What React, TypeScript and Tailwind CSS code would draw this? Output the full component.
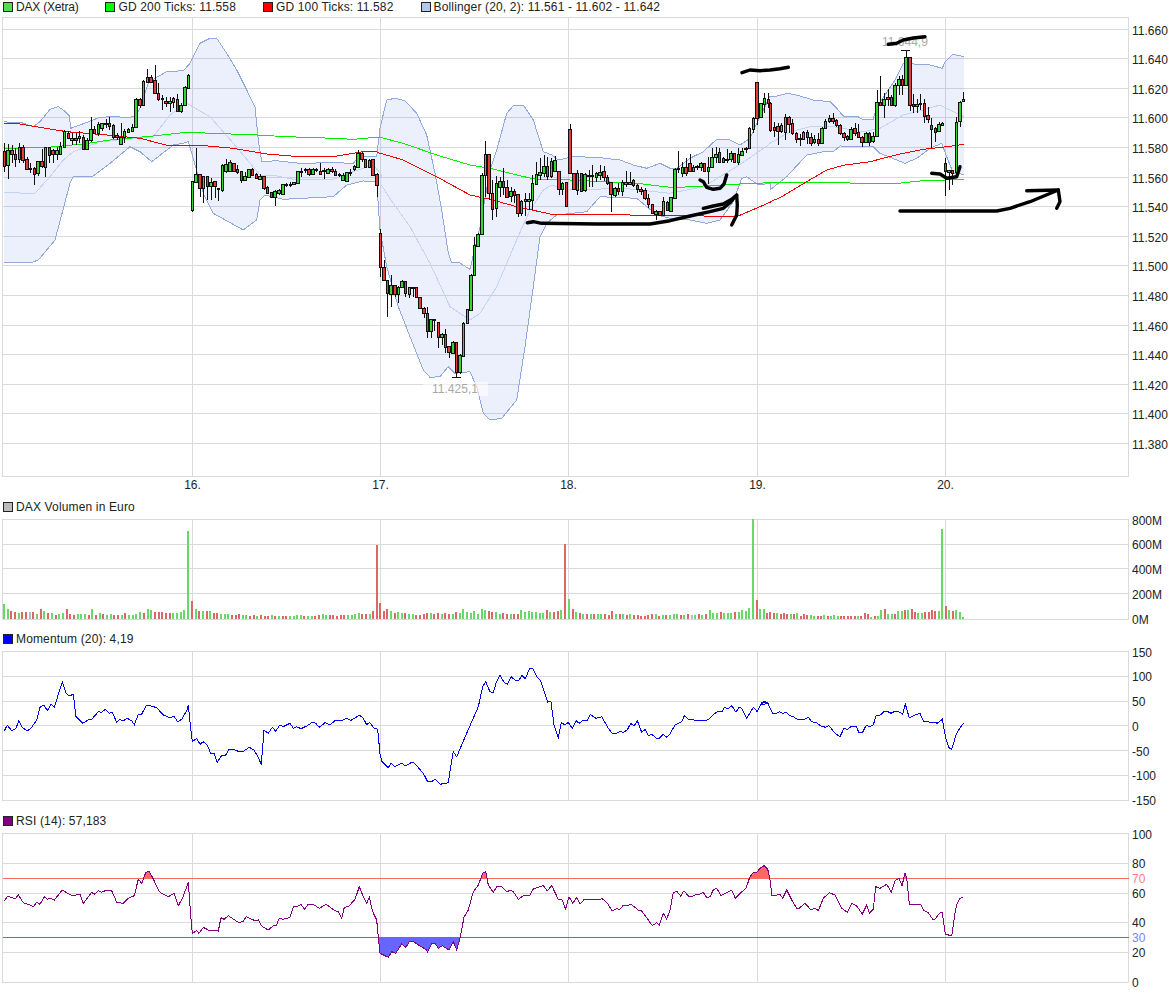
import type { ReactNode } from 'react';

const DAY_LINES = [192.5, 380.5, 568.5, 757.5, 945.5];
const LEFT = 2.5;
const RIGHT = 1128.5;

// points read off 3x crops: [x, y, x, y, ...] => screen coords
function crop(x0: number, y0: number, flat: number[]): [number, number][] {
  const out: [number, number][] = [];
  for (let i = 0; i < flat.length; i += 2) out.push([x0 + flat[i] / 3, y0 + flat[i + 1] / 3]);
  return out;
}
const toPoints = (pts: [number, number][]) => pts.map((p) => `${p[0].toFixed(1)},${p[1].toFixed(1)}`).join(' ');

type Candle = [number, number, number, number, number]; // green, top, bottom, high, low

const DAY1: Candle[] = [
  [0,453,497,430,515],[1,450,495,433,538],[0,450,463,436,490],[0,463,477,445,500],[1,441,477,428,490],[0,441,480,436,490],[0,478,506,470,510],[1,503,505,488,520],[0,505,521,500,555],[1,484,520,484,528],
  [0,484,497,448,505],[1,442,500,440,530],[0,442,465,442,490],[0,451,463,446,488],[1,450,463,440,480],[1,437,461,425,465],[1,393,440,390,442],[0,398,414,392,418],[1,413,420,398,435],[0,415,421,400,435],
  [1,408,415,392,430],[0,412,446,405,448],[1,420,447,415,450],[1,388,421,352,425],[0,388,398,378,402],[1,372,398,365,408],[1,370,383,368,392],[1,369,372,358,385],[0,370,378,352,390],[0,375,412,372,416],
  [0,406,410,400,420],[1,410,433,370,435],[1,392,412,388,428],[1,388,395,383,398],[1,381,392,372,395],[1,298,380,295,385],[0,298,314,295,325],[1,243,314,240,318],[1,232,246,208,250],[0,232,245,225,250],
  [0,241,278,195,280],[0,278,297,250,303],[1,295,297,285,330],[0,303,308,290,320],[1,304,310,290,335],[1,295,305,290,325],[0,296,334,282,337],[1,316,334,310,338],[1,262,314,258,316],[1,224,263,222,265],
];
const DAY2: Candle[] = [
  [1,544,630,544,635],[1,522,545,445,548],[0,522,563,522,590],[1,528,563,528,608],[0,528,557,528,600],[1,546,557,535,600],[0,544,558,544,595],[1,565,568,565,602],[1,496,570,493,575],[1,492,512,478,518],
  [1,485,512,480,515],[0,488,513,488,515],[0,507,515,495,522],[0,514,540,514,548],[1,529,540,516,543],[1,507,530,506,535],[0,507,524,503,525],[0,522,535,518,537],[1,528,536,522,540],[0,529,564,528,570],
  [0,561,578,558,580],[0,576,590,575,592],[1,574,590,570,617],[1,570,580,566,585],[1,553,581,553,583],[1,553,556,548,562],[1,552,556,545,562],[1,547,552,545,556],[1,514,550,513,552],[1,512,514,503,532],
  [0,508,511,505,520],[0,507,523,505,527],[1,508,523,505,525],[1,508,510,503,516],[0,512,522,490,525],[1,510,513,505,538],[1,507,518,503,522],[0,507,514,502,520],[0,513,525,506,528],[1,522,525,518,532],
  [1,525,541,520,543],[1,517,542,515,545],[1,515,517,508,527],[1,498,508,495,512],[1,458,500,450,503],[0,460,478,455,485],[0,478,500,476,505],[1,480,500,476,505],[0,478,524,476,526],[0,523,555,520,590],
];
const DAY3A: Candle[] = [
  [0,460,562,448,590],[0,562,600,540,602],[0,600,640,600,710],[1,616,642,586,682],[0,616,642,616,652],[1,620,642,617,668],[1,602,620,600,622],[0,604,640,604,650],[1,622,642,620,655],[1,620,622,620,652],
  [0,622,652,622,655],[0,650,685,650,688],[0,685,700,680,715],[0,700,752,680,775],[1,717,752,717,775],[1,718,720,718,752],[0,727,772,727,805],[1,763,772,760,795],[0,763,800,748,820],[0,798,817,798,835],
  [1,786,818,784,822],[0,786,876,785,890],[1,826,875,822,882],[1,728,828,726,830],[1,688,730,688,732],[1,584,690,582,692],[1,496,584,470,586],[1,463,497,458,500],[1,284,463,280,465],[1,223,285,183,350],
  [0,223,340,223,360],[0,340,386,300,420],[1,310,385,288,410],[1,302,320,290,352],[0,303,322,265,345],[0,322,350,300,352],[1,332,348,322,365],[0,332,345,328,370],[0,343,398,343,412],[1,362,398,360,408],
  [1,358,362,340,408],[1,358,362,340,390],
];
const DAY3B: Candle[] = [
  [1,310,360,284,390],[1,283,312,245,315],[1,277,284,235,300],[1,258,278,225,290],[0,258,288,230,300],[1,242,288,235,295],[1,240,272,228,275],[0,272,328,272,345],[1,308,328,305,345],[0,307,377,307,378],
  [0,148,278,132,280],[0,280,326,278,330],[1,278,330,270,345],[0,278,332,278,335],[1,282,330,280,335],[1,284,288,270,320],[1,286,289,255,320],[1,280,290,275,305],[1,275,285,255,300],[0,274,292,258,302],
  [0,290,308,285,315],[0,307,343,305,395],[1,325,345,322,350],[0,324,332,308,345],[1,305,332,300,348],[1,305,313,273,320],[1,305,312,275,315],[0,300,316,298,320],[0,316,326,313,338],[0,326,334,320,345],
  [0,330,355,325,360],[0,355,373,342,385],[0,373,400,372,403],[1,392,402,390,420],[0,392,405,392,408],[1,363,405,350,407],[0,365,390,362,392],[1,352,392,350,394],[1,268,353,265,355],[1,263,268,212,280],
  [1,262,280,245,292],[0,262,280,235,288],[0,250,272,222,275],[1,260,272,256,275],[1,258,262,255,270],[1,250,262,245,272],[0,250,272,248,275],[1,262,272,230,312],[1,232,262,205,265],[1,222,232,202,248],
  [0,216,245,204,248],[0,235,245,232,250],[1,236,238,208,250],[1,220,236,212,245],[0,220,245,218,248],[1,222,245,205,255],[1,212,224,205,226],[1,205,208,200,218],[1,145,205,142,207],[1,115,147,112,160],
  [0,5,115,5,135],[1,70,112,68,115],[1,55,72,40,100],[0,58,70,40,85],
];
const DAY4B: Candle[] = [
  [0,250,330,245,335],[0,322,330,305,352],[0,318,333,310,375],[1,315,333,310,340],[1,292,337,282,360],[0,292,312,288,338],[0,310,340,298,345],[0,338,356,335,370],[1,355,358,342,378],[1,336,356,333,360],
  [0,336,352,330,372],[0,352,368,340,378],[1,358,366,345,372],[0,358,368,340,378],[1,325,368,322,370],[1,303,325,298,328],[1,294,304,285,310],[0,295,302,280,312],[0,300,316,298,320],[0,315,340,312,345],
  [0,340,350,335,362],[0,348,358,345,362],[1,326,358,322,360],[0,325,338,310,348],[0,335,350,312,352],[0,350,366,348,380],[1,338,365,335,368],[0,338,365,335,378],[1,348,362,335,368],[1,247,348,210,350],
  [0,247,255,168,258],[1,238,255,220,295],[0,232,238,208,258],[0,232,256,225,258],[1,194,256,190,260],[1,178,196,168,226],[0,178,196,165,225],[1,112,196,92,198],[0,112,255,112,272],[0,253,257,222,280],
  [1,253,257,238,280],[0,250,253,222,270],[0,250,288,238,308],[0,286,296,260,310],[0,316,326,295,385],[0,324,335,320,365],[1,312,332,305,335],[1,308,315,305,318],
];
const DAY5: Candle[] = [
  [0,430,452,415,527],[1,450,455,450,510],[0,450,460,450,495],[1,307,455,292,462],[1,245,302,243,322],[1,236,244,217,246],
];

const CANDLE_BLOCKS: { items: Candle[]; from: number; to: number; y0: number }[] = [
  { items: DAY1, from: 4.3, to: 188.7, y0: 0 },
  { items: DAY2, from: 192.3, to: 377, y0: 0 },
  { items: DAY3A, from: 380.3, to: 529, y0: 80 },
  { items: DAY3B, from: 532.7, to: 768.3, y0: 80 },
  { items: DAY4B, from: 770.7, to: 942.7, y0: 20 },
  { items: DAY5, from: 945.3, to: 963.7, y0: 20 },
];

const VOLUME_BLOCKS: { bars: string; from: number; to: number }[] = [
  {
    from: 4,
    to: 188,
    bars: 'G15 G10 R8 R7 G6 R7 R7 N7 R7 G5 R10 G8 R6 G6 R4 G5 G6 R10 R5 R4 G5 G5 G5 R4 G10 R4 G6 R5 G4 G5 R4 R4 G4 R6 G4 G4 G5 G7 R6 G10 G9 R7 R7 R7 R6 R6 G6 G6 G7 G9 G88',
  },
  {
    from: 192,
    to: 377,
    bars: 'R18 G10 R8 G8 R8 G8 R6 R6 G5 G5 G5 R4 R4 R5 G4 G4 R3 R4 G3 R4 R3 R3 G4 R3 G3 R3 R3 G3 G3 G4 G4 R3 G3 G3 R3 R4 G5 G4 R4 R4 R3 R4 R4 G4 G4 G5 G6 R5 R5 G5 R8 R74',
  },
  {
    from: 380,
    to: 565,
    bars: 'R16 R8 R10 G8 R6 G7 G6 R6 G5 G5 R4 R4 R5 R6 G6 R5 R6 G5 R6 R5 G5 R7 G6 G10 G7 G6 G8 G5 G10 G9 R8 R7 G7 G5 R6 R5 G5 R5 R5 G9 G7 G8 G7 G7 G6 G6 R9 G7 R7 R8 G9 R75',
  },
  {
    from: 569,
    to: 753,
    bars: 'G20 R10 G7 R6 G5 R5 G5 R5 G5 G5 R5 R4 R8 G5 R5 G5 R4 G5 R4 R4 R3 R3 R4 R5 G5 R3 G4 R4 G4 G5 G5 R4 G4 R5 N4 G4 R5 G4 R5 G9 G6 G6 R7 G6 G6 G6 R7 G7 G9 G8 G11 G100',
  },
  {
    from: 757,
    to: 942,
    bars: 'R19 G10 G10 R6 R7 R6 G6 R5 R6 R5 G5 R5 G6 R3 R5 R4 G4 G3 R3 R3 G4 R3 G3 G4 G3 R3 R3 R3 R3 R3 G3 R3 R6 R5 G2 R3 G3 G9 R10 G5 G5 R5 G8 G8 R9 G9 R10 R7 G6 G6 R7 R7 R9 R8 G8 G90',
  },
  { from: 946, to: 963, bars: 'R13 G9 R8 G9 G7 G2' },
];

const VOLUME_FILL: Record<string, string> = { G: '#66d966', R: '#dd6666', N: '#bbbbbb' };

const BB_UPPER = [
  ...crop(0, 0, [13,365,40,368,65,368,100,380,120,365,150,328,175,320,190,330,208,348,212,385,240,375,300,352,340,350,380,352,405,350,420,325,445,250,470,232,500,215,550,212,570,190,600,130,630,115,650,115,680,160,710,210,740,270,765,320,775,420,785,485,830,482,900,490,1000,488,1060,490,1080,465,1100,470,1130,470]),
  ...crop(370, 80, [30,145,50,60,75,55,105,62,140,100,170,165,195,280,215,390,235,520,245,548,265,546,300,568,330,440,360,270,380,210,410,100,432,75,460,75,490,120,520,215,545,225,565,240,610,230,680,232,750,240,790,255,830,265,870,250,900,265,920,265,960,235,1000,215,1040,178,1080,180,1110,195,1140,175,1165,120,1195,60]),
  ...crop(770, 20, [0,228,20,228,55,220,90,228,130,240,180,245,200,265,220,288,260,288,275,297,310,297,320,260,345,225,375,180,400,130,480,135,517,145,525,125,548,103,582,110]),
];
const BB_LOWER = [
  [4, 262] as [number, number],
  [30, 263] as [number, number],
  ...crop(0, 0, [115,780,165,720,210,550,220,530,280,528,330,490,390,440,420,455,455,485,520,435,550,430,565,425,575,460,610,580,640,640,730,690,770,660,780,600,795,585,850,598,1000,590,1040,555,1090,543,1130,545]),
  ...crop(370, 80, [30,450,50,560,85,680,120,770,160,870,180,892,210,890,235,860,255,880,300,875,320,920,340,1000,360,1020,395,1015,440,960,465,800,490,620,510,470,530,430,560,405,650,395,690,350,800,355,860,405,900,415,960,420,1010,430,1050,420,1090,365,1115,295,1130,290,1165,315,1200,310]),
  ...crop(770, 20, [0,510,50,470,110,405,160,395,190,395,210,378,310,380,330,400,405,430,440,415,480,385,515,370,530,410,550,460,582,463]),
];
const BB_MID = [
  ...crop(0, 0, [13,578,105,580,150,530,190,480,220,455,300,425,400,415,460,410,510,345,560,310,630,350,700,430,780,525,830,528,890,540,1000,538,1060,515,1120,495,1145,525]),
  ...crop(370, 80, [30,310,70,370,120,440,180,550,240,680,300,720,330,700,380,620,440,480,480,390,520,330,545,315,600,330,760,325,900,340,1000,320,1100,260,1195,195]),
  ...crop(770, 20, [0,370,60,335,120,320,190,320,280,335,330,325,400,285,440,275,510,255,540,270,582,290]),
];
const GD200 = [
  ...crop(0, 0, [13,445,130,443,250,432,330,420,460,408,560,397,640,400,770,405,860,410,1000,415,1060,418,1130,412]),
  ...crop(370, 80, [30,172,100,190,200,225,300,255,360,265,470,292,500,298,600,300,700,305,800,310,910,323,1000,318,1090,313,1200,308]),
  ...crop(770, 20, [0,488,100,487,300,490,385,490,450,483,582,478]),
];
const GD100 = [
  ...crop(0, 0, [13,370,60,372,200,395,320,405,420,415,510,438,600,436,700,445,800,462,900,470,1000,470,1090,455,1130,456]),
  ...crop(370, 80, [25,218,100,240,200,290,300,345,360,358,440,380,545,403,730,403,780,405,860,405,1100,410,1200,367]),
  ...crop(770, 20, [0,545,30,533,110,485,170,450,220,436,300,425,385,403,460,388,540,379,582,373]),
];
const MOMENTUM = [
  ...crop(0, 650, [13,242,22,226,35,242,48,235,56,212,66,232,82,242,92,236,110,210,120,172,132,165,142,182,153,163,163,172,187,95,198,130,207,138,220,133,228,200,248,220,265,210,275,208,295,185,305,187,316,178,328,190,337,187,350,217,360,208,370,213,381,205,395,212,403,224,415,193,425,192,438,168,447,166,470,173,490,195,510,203,522,199,533,215,545,208,560,182,565,166,572,235,577,275,590,265,600,283,610,275,622,285,632,310,642,310,652,337,665,316,677,315,687,298,700,298,715,304,730,304,748,292,762,300,775,322,784,344,792,240,805,250,817,232,827,244,838,227,852,229,870,220,880,235,890,230,903,236,920,228,937,217,947,220,958,232,975,218,990,224,1005,212,1028,211,1040,205,1053,211,1078,196,1088,202,1100,224,1109,217,1122,235,1133,238]),
  ...crop(380, 650, [0,312,5,333,25,353,33,340,45,350,65,340,77,348,95,337,102,338,130,370,143,395,155,395,165,388,180,403,205,398,212,350,220,305,230,320,260,250,295,170,308,110,317,95,330,125,340,128,348,100,360,75,372,97,382,103,393,80,407,92,417,90,426,76,436,86,449,55,458,55,470,80,482,92,503,156,513,155,522,225,535,262,544,218,555,225,565,217,577,235,588,212,598,220,608,212,622,212,631,194,648,205,665,200,685,235,697,250,710,250,720,245,730,247,742,240,752,220,762,228,772,212,785,247,796,238,805,258,815,253,830,265,838,265,850,253,860,262,868,255,885,225,905,215,913,197,925,207,938,208,948,213,980,211,990,205,1005,190,1015,184,1027,184,1033,173,1045,175,1056,167,1068,187,1077,172,1085,175,1100,205,1120,172,1132,185,1145,158,1153,154,1164,160]),
  ...crop(760, 650, [0,165,12,155,24,162,38,190,45,192,58,185,68,190,78,187,90,197,100,200,110,207,132,208,145,202,155,215,170,218,182,228,197,232,207,227,225,250,240,260,252,235,262,238,275,228,288,228,296,246,308,246,318,227,330,229,340,225,348,197,360,196,373,184,382,184,393,190,405,184,415,184,428,193,436,162,448,204,470,193,480,190,490,213,503,213,512,219,522,216,532,220,547,208,558,268,568,295,575,298,588,255,600,233,610,220]),
];
const RSI = [
  ...crop(0, 800, [13,302,22,290,35,292,45,297,55,285,70,308,85,313,100,320,110,307,120,313,133,290,142,298,152,295,163,300,187,270,200,278,218,288,240,282,250,310,275,277,283,283,295,272,305,277,320,270,335,272,350,307,370,310,385,295,403,287,415,238,425,250,437,218,447,213,460,237,478,275,490,283,505,290,522,280,535,317,548,293,565,247,572,345,577,400,590,392,597,400,610,382,625,390,650,390,655,393,663,353,672,358,685,347,715,367,730,365,738,350,765,362,775,360,785,378,805,390,820,377,828,378,838,355,850,358,870,352,880,320,895,318,903,313,913,328,925,313,940,313,958,325,978,313,1005,332,1015,335,1025,355,1033,322,1045,320,1065,298,1078,260,1090,290,1100,310,1108,292,1118,335,1130,360,1135,412,1140,460,1165,472,1175,455,1187,460,1205,432,1218,442,1228,425,1240,425,1280,450,1282,458,1295,430,1305,430,1315,445,1327,437,1347,450,1360,425,1370,450]),
  ...crop(460, 830, [0,325,12,262,25,240,40,185,55,165,68,130,77,125,85,165,100,187,110,170,125,170,142,186,150,180,160,185,175,208,190,197,210,195,220,177,240,170,250,167,262,182,275,167,295,208,305,207,317,238,327,200,338,220,350,203,360,222,372,209,420,210,425,205,440,217,457,243,470,236,480,238,490,225,500,228,512,222,535,240,545,243,565,270,577,287,590,278,598,286,610,250,620,268,630,240,640,188,650,184,662,198,672,182,685,198,698,199,710,193,720,192,730,187,740,203,750,200,760,180,770,175,783,197,800,188,815,180,826,205,840,190,858,175,870,140,880,128,890,128]),
  ...crop(700, 800, [180,205,192,197,203,207,210,240,216,288,232,285,240,283,248,295,260,270,275,300,290,325,297,325,315,310,333,330,345,325,355,332,370,295,388,278,405,285,425,325,442,337,455,310,470,318,487,342,500,315,508,340,520,328,527,260,540,265,560,253,574,277,585,242,597,235,606,257,615,220,620,235,628,313,662,313,672,332,685,338,698,358,705,357,720,338,727,337,736,403,755,407,765,340,770,315,780,295,790,292]),
];

// hand-drawn marks over the chart
const INK: { d: [number, number][] }[] = [
  { d: crop(370, 80, [472,428,490,425,515,430,680,432,840,432,900,422,960,408,1020,395,1060,385,1080,368,1100,345]) },
  { d: crop(370, 80, [1000,385,1030,378,1060,372,1085,358,1100,345,1102,375,1100,405,1085,435]) },
  { d: crop(370, 80, [990,300,1000,305,1010,322,1030,328,1050,325,1062,312,1070,285]) },
  { d: crop(770, 20, [-84,158,-60,150,-30,152,0,150,30,146,55,142]) },
  { d: crop(770, 20, [355,73,380,70,400,60,430,54,465,50]) },
  { d: crop(770, 20, [390,573,680,573,720,565,780,545,865,510,770,512]) },
  { d: crop(770, 20, [865,510,870,545,860,565]) },
  { d: crop(770, 20, [485,460,510,462,530,475,560,470,570,440]) },
];

function Candles() {
  return (
    <g shapeRendering="crispEdges">
      {CANDLE_BLOCKS.flatMap((block, b) =>
        block.items.map((c, i) => {
          const step = (block.to - block.from) / (block.items.length - 1);
          const x = block.from + step * i;
          const left = Math.round(x - 1.75);
          const columns = Math.round(x + 1.75) - left;
          const wick = left + Math.floor(columns / 2) + 0.5;
          const yy = (v: number) => Math.round(block.y0 + v / 3);
          return (
            <g key={`${b}-${i}`}>
              <line x1={wick} x2={wick} y1={yy(c[3])} y2={yy(c[4])} stroke="#111111" />
              <rect
                x={left + 0.5}
                y={yy(c[1]) + 0.5}
                width={columns - 1}
                height={Math.max(1, yy(c[2]) - yy(c[1]))}
                fill={c[0] ? '#33d633' : '#e23c3c'}
                stroke="#111111"
              />
            </g>
          );
        }),
      )}
    </g>
  );
}

function VolumeBars() {
  return (
    <g shapeRendering="crispEdges">
      {VOLUME_BLOCKS.flatMap((block, b) => {
        const bars = block.bars.split(' ');
        return bars.map((token, i) => {
          const x = Math.round(block.from + ((block.to - block.from) / (bars.length - 1)) * i);
          const h = Number(token.slice(1));
          return <rect key={`${b}-${i}`} x={x - 1} y={619 - h} width={2} height={h} fill={VOLUME_FILL[token[0]]} />;
        });
      })}
    </g>
  );
}

function Legend({
  items,
  className,
}: {
  items: { color: string; label: string; tracking?: string }[];
  className: string;
}) {
  return (
    <div className={`flex items-center gap-[27px] pl-[3px] text-[12px] text-[#222222] ${className}`}>
      {items.map((item) => (
        <div key={item.label} className="flex items-center gap-[3px] whitespace-nowrap">
          <span className="size-[10px] border border-[#222222]" style={{ backgroundColor: item.color }} />
          <span className={`leading-none ${item.tracking ?? 'tracking-[0.15px]'}`}>{item.label}</span>
        </div>
      ))}
    </div>
  );
}

function Chart({
  top,
  height,
  bottom,
  frameTop,
  grid,
  labels,
  className,
  children,
}: {
  top: number;
  height: number;
  bottom: number;
  frameTop: number;
  grid: number[];
  labels: { y: number; text: string; color?: string }[];
  className: string;
  children: ReactNode;
}) {
  return (
    <svg
      className={`w-full overflow-visible text-[12px] ${className}`}
      viewBox={`0 ${top} 1175 ${height}`}
      fill="#222222"
    >
      <g stroke="#dadada" shapeRendering="crispEdges">
        {grid.map((y) => (
          <line key={y} x1={LEFT} x2={RIGHT} y1={y} y2={y} />
        ))}
        {DAY_LINES.map((x) => (
          <line key={x} x1={x} x2={x} y1={frameTop} y2={bottom} />
        ))}
        <rect x={LEFT} y={frameTop} width={RIGHT - LEFT} height={bottom - frameTop} fill="none" />
      </g>
      {children}
      {labels.map((l) => (
        <text key={l.text} x={1132} y={l.y + 5} fill={l.color ?? '#222222'}>
          {l.text}
        </text>
      ))}
    </svg>
  );
}

const PRICE_LABELS = [
  '11.660','11.640','11.620','11.600','11.580','11.560','11.540','11.520','11.500','11.480','11.460','11.440','11.420','11.400','11.380',
];
const priceY = (i: number) => Math.floor(29 + 29.6 * i) + 0.5;

export default function App() {
  return (
    <div className="h-[994px] w-[1175px] overflow-hidden bg-white font-['Liberation_Sans',Arial,sans-serif]">
      <Legend
        className="h-[13px]"
        items={[
          { color: '#4ce04c', label: 'DAX (Xetra)', tracking: 'tracking-[-0.2px]' },
          { color: '#00ff00', label: 'GD 200 Ticks: 11.558' },
          { color: '#ff0000', label: 'GD 100 Ticks: 11.582' },
          { color: '#b4c7ee', label: 'Bollinger (20, 2): 11.561 - 11.602 - 11.642' },
        ]}
      />

      <Chart
        className="h-[479px]"
        top={13}
        height={479}
        frameTop={17.5}
        bottom={476.5}
        grid={PRICE_LABELS.map((_, i) => priceY(i))}
        labels={PRICE_LABELS.map((text, i) => ({ text, y: priceY(i) }))}
      >
        <polygon points={toPoints([...BB_UPPER, ...[...BB_LOWER].reverse()])} fill="#3a6fe0" fillOpacity={0.1} />
        <g fill="none" shapeRendering="crispEdges">
          <polyline points={toPoints(BB_UPPER)} stroke="#90a9dd" />
          <polyline points={toPoints(BB_LOWER)} stroke="#90a9dd" />
          <polyline points={toPoints(BB_MID)} stroke="#c3d3f4" />
          <polyline points={toPoints(GD200)} stroke="#00ee00" />
          <polyline points={toPoints(GD100)} stroke="#f00000" />
        </g>
        <Candles />
        <line x1={452} x2={461} y1={377.5} y2={377.5} stroke="#111111" shapeRendering="crispEdges" />
        <line x1={901} x2={910} y1={50.5} y2={50.5} stroke="#111111" shapeRendering="crispEdges" />
        <rect x={423} y={382} width={65} height={14} fill="#ffffff" fillOpacity={0.6} />
        <text x={432} y={393} fill="#a8a8a8">11.425,1</text>
        <text x={882} y={46} fill="#a8a8a8">11.644,9</text>
        {INK.map((s, i) => (
          <polyline
            key={i}
            points={toPoints(s.d)}
            fill="none"
            stroke="#000000"
            strokeWidth={3.4}
            strokeLinecap="round"
            strokeLinejoin="round"
          />
        ))}
        {[16, 17, 18, 19, 20].map((day, i) => (
          <text key={day} x={DAY_LINES[i]} y={489} textAnchor="middle">
            {day}.
          </text>
        ))}
      </Chart>

      <Legend className="h-[27px] pt-[2px]" items={[{ color: '#bbbbbb', label: 'DAX Volumen in Euro' }]} />

      <Chart
        className="h-[107px]"
        top={519}
        height={107}
        frameTop={519.5}
        bottom={619.5}
        grid={[544.5, 568.5, 593.5]}
        labels={[
          { y: 520, text: '800M' },
          { y: 544, text: '600M' },
          { y: 569, text: '400M' },
          { y: 594, text: '200M' },
          { y: 619, text: '0M' },
        ]}
      >
        <VolumeBars />
      </Chart>

      <Legend className="h-[25px]" items={[{ color: '#0000ff', label: 'Momentum (20): 4,19' }]} />

      <Chart
        className="h-[157px]"
        top={651}
        height={157}
        frameTop={651.5}
        bottom={800.5}
        grid={[676.5, 701.5, 725.5, 750.5, 775.5]}
        labels={[
          { y: 652, text: '150' },
          { y: 676, text: '100' },
          { y: 701, text: '50' },
          { y: 726, text: '0' },
          { y: 751, text: '-50' },
          { y: 775, text: '-100' },
          { y: 800, text: '-150' },
        ]}
      >
        <polyline points={toPoints(MOMENTUM)} fill="none" stroke="#0000f0" shapeRendering="crispEdges" />
      </Chart>

      <Legend className="h-[25px]" items={[{ color: '#800080', label: 'RSI (14): 57,183' }]} />

      <Chart
        className="h-[161px]"
        top={833}
        height={161}
        frameTop={833.5}
        bottom={982.5}
        grid={[863.5, 893.5, 922.5, 952.5]}
        labels={[
          { y: 834, text: '100' },
          { y: 863, text: '80' },
          { y: 878, text: '70', color: '#ff8080' },
          { y: 893, text: '60' },
          { y: 922, text: '40' },
          { y: 937, text: '30', color: '#8080ff' },
          { y: 952, text: '20' },
          { y: 982, text: '0' },
        ]}
      >
        <defs>
          <clipPath id="rsi-over">
            <rect x={0} y={833} width={1175} height={45.5} />
          </clipPath>
          <clipPath id="rsi-under">
            <rect x={0} y={937.5} width={1175} height={50} />
          </clipPath>
        </defs>
        <polygon points={toPoints(RSI)} fill="#ff6666" clipPath="url(#rsi-over)" />
        <polygon points={toPoints(RSI)} fill="#6666ff" clipPath="url(#rsi-under)" />
        <g shapeRendering="crispEdges">
          <line x1={LEFT} x2={RIGHT} y1={878.5} y2={878.5} stroke="#ff6666" />
          <line x1={LEFT} x2={RIGHT} y1={937.5} y2={937.5} stroke="#6666ee" />
        </g>
        <polyline points={toPoints(RSI)} fill="none" stroke="#800080" shapeRendering="crispEdges" />
      </Chart>
    </div>
  );
}
